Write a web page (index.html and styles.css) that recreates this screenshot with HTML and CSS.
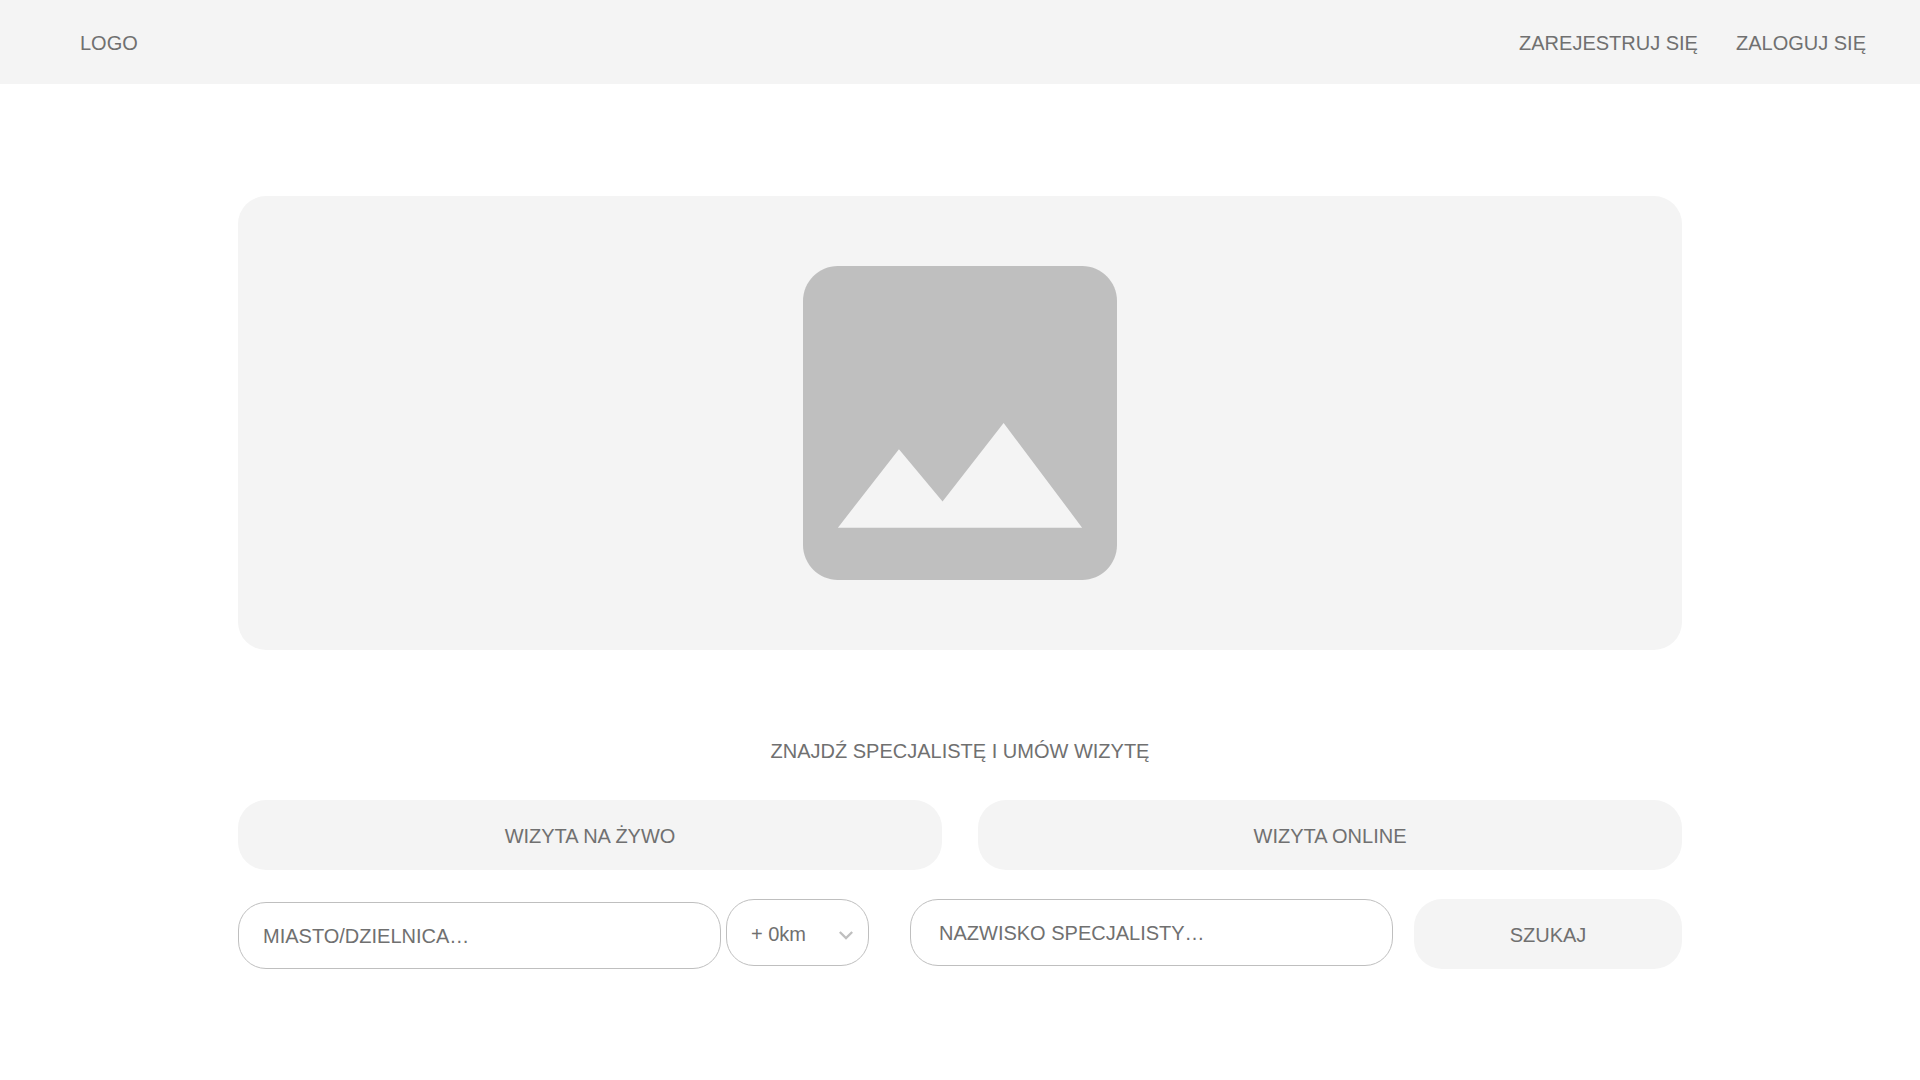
FILE: index.html
```
<!DOCTYPE html>
<html lang="pl">
<head>
    <meta charset="UTF-8">
    <meta name="viewport" content="width=device-width, initial-scale=1.0">
    <title>Znajdź specjalistę</title>

    <link rel="stylesheet" href="styles.css">
</head>
<body>
    <!-- Nagłówek -->
    <header class="header">
        <a href="index.html" class="logo">LOGO</a>
        <nav class="nav-bar">
            <a href="register.html">ZAREJESTRUJ SIĘ</a>
            <a href="login.html">ZALOGUJ SIĘ</a>
        </nav>
    </header>

    <main class="container">
        <!-- Baner -->
        <section class="banner">
            <svg class="banner-image" viewBox="0 0 18 18" role="img" aria-label="Zdjęcie">
                <path fill="#bfbfbf" d="M18 16V2c0-1.1-.9-2-2-2H2C.9 0 0 .9 0 2v14c0 1.1.9 2 2 2h14c1.1 0 2-.9 2-2z"/>
                <path fill="#f4f4f4" d="M5.5 10.5L8 13.5 11.5 9l4.500 6H2l3.5-4.5z"/>
            </svg>
        </section>

        <!-- Wyszukiwarka -->
        <h1 class="title">ZNAJDŹ SPECJALISTĘ I UMÓW WIZYTĘ</h1>

        <div class="visit-type">
            <button type="button" class="button">WIZYTA NA ŻYWO</button>
            <button type="button" class="button">WIZYTA ONLINE</button>
        </div>

        <form class="search">
            <input type="text" class="field city" name="city" aria-label="Miasto lub dzielnica" placeholder="MIASTO/DZIELNICA…">
            <div class="distance">
                <select class="field" name="distance" aria-label="Odległość">
                    <option>+ 0km</option>
                    <option>+ 5km</option>
                    <option>+ 10km</option>
                    <option>+ 25km</option>
                </select>
                <svg class="arrow" viewBox="0 0 12 7.4" aria-hidden="true">
                    <path d="M1.4 0L6 4.6 10.6 0 12 1.4l-6 6-6-6z" fill="#bfbfbf"/>
                </svg>
            </div>
            <input type="text" class="field name" name="name" aria-label="Nazwisko specjalisty" placeholder="NAZWISKO SPECJALISTY…">
            <button type="submit" class="button submit">SZUKAJ</button>
        </form>
    </main>
</body>
</html>
```
FILE: styles.css
```
* {
    box-sizing: border-box;
}

body {
    margin: 0;
    background-color: #fff;
    color: #707070;
    font-family: "Liberation Sans", Arial, sans-serif;
    font-size: 20px;
    line-height: 24px;
}

a {
    color: inherit;
    text-decoration: none;
}

/* Nagłówek */
.header {
    display: flex;
    justify-content: space-between;
    align-items: center;
    padding: 31px 54px 29px 80px;
    background-color: #f4f4f4;
}

.nav-bar {
    display: flex;
    gap: 38px;
}

.container {
    max-width: 1444px;
    margin: 112px auto;
}

/* Baner */
.banner {
    display: flex;
    justify-content: center;
    padding: 70px;
    background-color: #f4f4f4;
    border-radius: 28px;
}

.banner-image {
    width: 314px;
    height: 314px;
}

.title {
    margin: 89px 0 37px;
    font-size: 20px;
    font-weight: normal;
    text-align: center;
}

/* Przyciski i pola formularza */
.button,
.field {
    border-radius: 28px;
    color: inherit;
    font: inherit;
}

.button {
    height: 70px;
    padding: 2px 20px 0;
    border: none;
    background-color: #f4f4f4;
    cursor: pointer;
}

.field {
    width: 100%;
    height: 67px;
    padding: 2px 24px 0;
    border: 1px solid #bfbfbf;
    background-color: #fff;
    appearance: none;
}

.field::placeholder {
    color: inherit;
    opacity: 1;
}

.visit-type {
    display: grid;
    grid-template-columns: 1fr 1fr;
    gap: 36px;
}

/* Wiersz wyszukiwania */
.search {
    display: flex;
    align-items: flex-start;
    margin-top: 29px;
}

.city,
.name {
    flex: 1 1 200px;
    min-width: 0;
}

.city {
    align-self: flex-end;
}

.distance {
    position: relative;
    width: 143px;
    margin: 0 41px 0 5px;
}

.name {
    padding-left: 28px;
}

/* Strzałka nad listą odległości */
.arrow {
    position: absolute;
    top: 32px;
    right: 16px;
    width: 14px;
    height: 9px;
    pointer-events: none;
}

.submit {
    width: 268px;
    margin-left: 21px;
}
```
